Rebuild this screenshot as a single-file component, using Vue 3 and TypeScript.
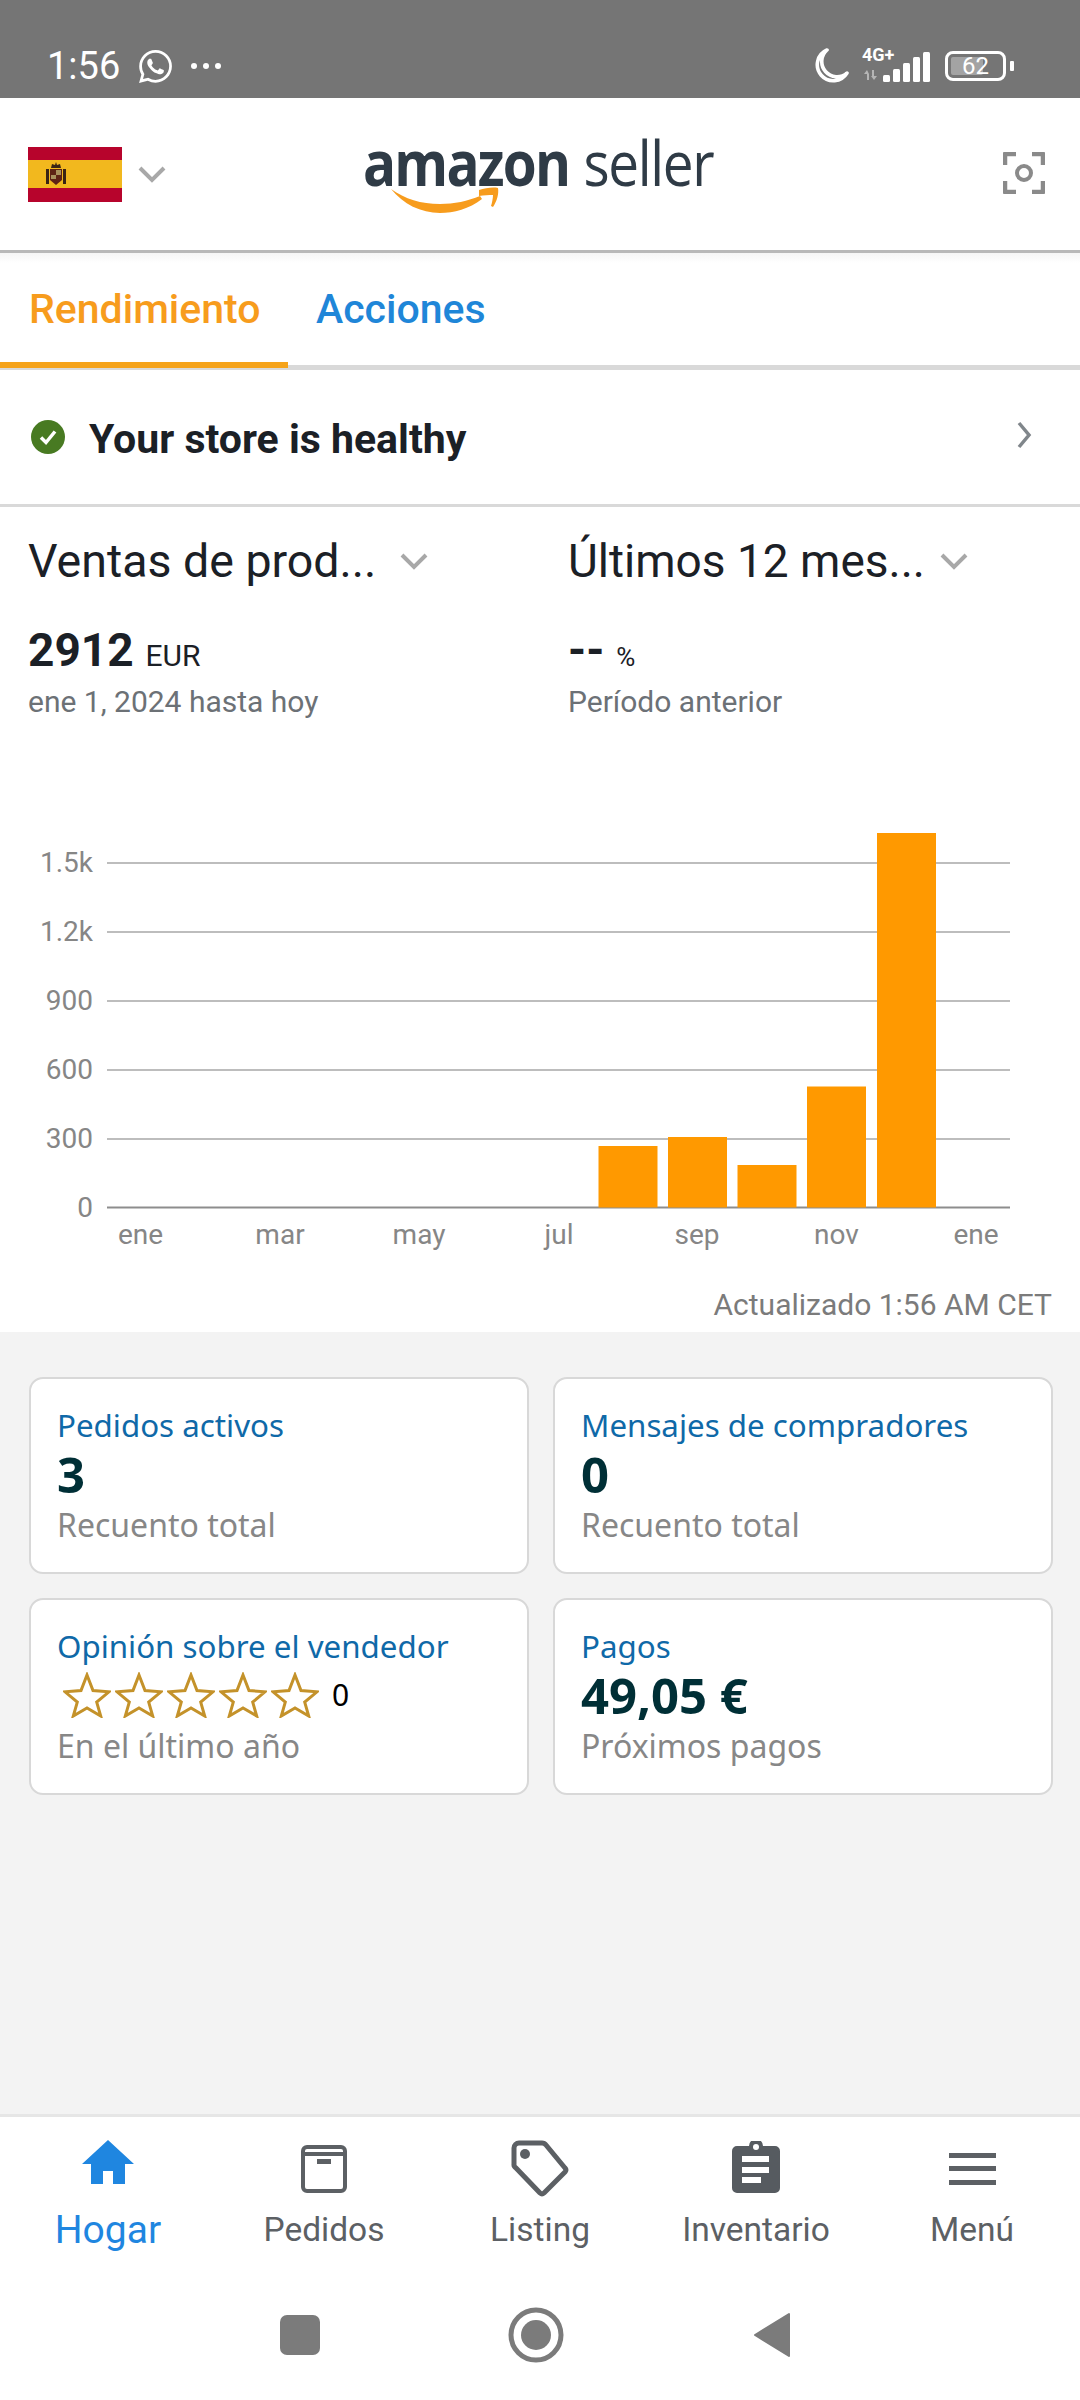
<script setup lang="ts">
const gridLines = [
  { label: "1.5k", y: 63 },
  { label: "1.2k", y: 132 },
  { label: "900", y: 201 },
  { label: "600", y: 270 },
  { label: "300", y: 339 },
  { label: "0", y: 407.5 },
];

const months = [
  { label: "ene", x: 140.5 },
  { label: "mar", x: 280 },
  { label: "may", x: 419 },
  { label: "jul", x: 559 },
  { label: "sep", x: 697 },
  { label: "nov", x: 836.5 },
  { label: "ene", x: 976 },
];

const bars = [
  { x: 598.5, top: 346 },
  { x: 668, top: 337 },
  { x: 737.5, top: 365 },
  { x: 807, top: 286.5 },
  { x: 877, top: 33 },
];

const signalBars = [
  { x: 0, h: 7 },
  { x: 10, h: 13 },
  { x: 20, h: 19 },
  { x: 30, h: 25 },
  { x: 40, h: 30 },
];

const stars = [0, 1, 2, 3, 4];
</script>

<template>
  <div class="screen">
    <div class="status-bar">
      <div class="status-left">
        <span class="clock">1:56</span>
        <svg class="wa" viewBox="0 0 24 24" width="33" height="33">
          <path fill="#fff" d="M17.472 14.382c-.297-.149-1.758-.867-2.03-.967-.273-.099-.471-.148-.67.15-.197.297-.767.966-.94 1.164-.173.199-.347.223-.644.075-.297-.15-1.255-.463-2.39-1.475-.883-.788-1.48-1.761-1.653-2.059-.173-.297-.018-.458.13-.606.134-.133.298-.347.446-.52.149-.174.198-.298.298-.497.099-.198.05-.371-.025-.52-.075-.149-.669-1.612-.916-2.207-.242-.579-.487-.5-.669-.51-.173-.008-.371-.01-.57-.01-.198 0-.52.074-.792.372-.272.297-1.04 1.016-1.04 2.479 0 1.462 1.065 2.875 1.213 3.074.149.198 2.096 3.2 5.077 4.487.709.306 1.262.489 1.694.625.712.227 1.36.195 1.871.118.571-.085 1.758-.719 2.006-1.413.248-.694.248-1.289.173-1.413-.074-.124-.272-.198-.57-.347m-5.421 7.403h-.004a9.87 9.87 0 01-5.031-1.378l-.361-.214-3.741.982.998-3.648-.235-.374a9.86 9.86 0 01-1.51-5.26c.001-5.45 4.436-9.884 9.888-9.884 2.64 0 5.122 1.03 6.988 2.898a9.825 9.825 0 012.893 6.994c-.003 5.45-4.437 9.884-9.885 9.884m8.413-18.297A11.815 11.815 0 0012.05 0C5.495 0 .16 5.335.157 11.892c0 2.096.547 4.142 1.588 5.945L.057 24l6.305-1.654a11.882 11.882 0 005.683 1.448h.005c6.554 0 11.89-5.335 11.893-11.893a11.821 11.821 0 00-3.48-8.413z" />
        </svg>
        <div class="dots"><i></i><i></i><i></i></div>
      </div>
      <div class="status-right">
        <svg class="moon" viewBox="0 0 36 36" width="36" height="36">
          <path fill="none" stroke="#fff" stroke-width="3.6" stroke-linejoin="round" d="M13 3 A16 16 0 1 0 33 26 A15 15 0 0 1 13 3Z" />
        </svg>
        <div class="network">
          <span class="net-type">4G+</span>
          <svg class="arrows" viewBox="0 0 14 10" width="14" height="10">
            <path fill="#b5b5b5" d="M0 4l3-4 2 4v6H3V4zM8 0h2v6h3l-3 4-3-4h1z" />
          </svg>
          <svg class="signal" viewBox="0 0 48 30" width="48" height="30">
            <rect v-for="b in signalBars" :key="b.x" :x="b.x" :y="30 - b.h" width="7" :height="b.h" rx="1.5" fill="#fff" />
          </svg>
        </div>
        <div class="battery">
          <div class="battery-fill"></div>
          <span class="battery-text">62</span>
        </div>
        <div class="battery-nub"></div>
      </div>
    </div>

    <header class="top-bar">
      <div class="flag-box">
        <svg viewBox="0 0 94 55" width="94" height="55">
          <rect width="94" height="55" fill="#b7042c" />
          <rect y="13" width="94" height="28" fill="#f2b81e" />
          <path fill="#3a2415" d="M23 21l1-4 3 1 1-3 1 3 3-1 1 4z" />
          <rect x="18" y="22" width="3" height="15" fill="#3a2415" />
          <rect x="35" y="22" width="3" height="15" fill="#3a2415" />
          <path fill="#5e2316" d="M22 22h12v11l-6 5-6-5z" />
          <path fill="#a8905e" d="M28 23h5v5h-5zM23 28h5v4h-5z" />
        </svg>
        <svg class="chev-flag" viewBox="0 0 28 17" width="28" height="17">
          <path fill="none" stroke="#a8a8a8" stroke-width="4" d="M2 2l12 12L26 2" />
        </svg>
      </div>
      <div class="logo">
        <div class="logo-text">
          <span class="logo-amazon">amazon</span>
          <span class="logo-seller">seller</span>
        </div>
        <svg class="smile" viewBox="0 0 110 26" width="110" height="26">
          <path fill="#f79c1d" d="M0 2C14 12 30 17 49 17c14 0 28-3 40-8l2 3C78 22 63 26 49 26 30 26 12 17 0 2z" />
          <path fill="#f79c1d" d="M88 3c6-2 14-3 19-2 1 6-1 13-5 19l-2-1c1-3 2-8 2-11-4 0-9 0-14 1z" />
        </svg>
      </div>
      <svg class="scan" viewBox="0 0 42 42" width="42" height="42">
        <path fill="none" stroke="#8a8a8a" stroke-width="4.500" stroke-linejoin="round" d="M13 2H2v11M29 2h11v11M2 29v11h11M40 29v11H29" />
        <circle cx="21" cy="21" r="7" fill="none" stroke="#8a8a8a" stroke-width="4" />
      </svg>
    </header>

    <nav class="tabs">
      <div class="tab active">Rendimiento</div>
      <div class="tab">Acciones</div>
    </nav>

    <div class="health">
      <svg viewBox="0 0 34 34" width="34" height="34">
        <circle cx="17" cy="17" r="17" fill="#487a22" />
        <path fill="none" stroke="#fff" stroke-width="3.500" d="M10 17.500l5 5 9-11" />
      </svg>
      <span class="health-text">Your store is healthy</span>
      <svg class="health-chev" viewBox="0 0 16 28" width="16" height="28">
        <path fill="none" stroke="#80868b" stroke-width="3.500" d="M3 2l10 12L3 26" />
      </svg>
    </div>

    <section class="sales">
      <div class="metric metric-left">
        <div class="select">
          <span class="select-text">Ventas de prod...</span>
          <svg viewBox="0 0 28 17" width="28" height="17">
            <path fill="none" stroke="#a8a8a8" stroke-width="4" d="M2 2l12 12L26 2" />
          </svg>
        </div>
        <div class="figure"><b>2912</b> <span>EUR</span></div>
        <div class="caption">ene 1, 2024 hasta hoy</div>
      </div>
      <div class="metric metric-right">
        <div class="select">
          <span class="select-text">Últimos 12 mes...</span>
          <svg viewBox="0 0 28 17" width="28" height="17">
            <path fill="none" stroke="#a8a8a8" stroke-width="4" d="M2 2l12 12L26 2" />
          </svg>
        </div>
        <div class="figure"><b>--</b> <span class="pct">%</span></div>
        <div class="caption">Período anterior</div>
      </div>
    </section>

    <svg class="chart" viewBox="0 0 1080 470" width="1080" height="470">
      <g v-for="g in gridLines" :key="g.label">
        <line x1="107" x2="1010" :y1="g.y" :y2="g.y" :stroke="g.label === '0' ? '#8d8d8d' : '#bdbdbd'" stroke-width="2" />
        <text x="93" :y="g.y + 9" text-anchor="end" class="axis">{{ g.label }}</text>
      </g>
      <rect v-for="b in bars" :key="b.x" :x="b.x" :y="b.top" width="59" :height="407.5 - b.top" fill="#ff9900" />
      <text v-for="m in months" :key="m.x" :x="m.x" y="444" text-anchor="middle" class="axis">{{ m.label }}</text>
    </svg>

    <div class="updated">Actualizado 1:56 AM CET</div>

    <main class="cards-area">
      <div class="cards">
        <div class="card">
          <div class="card-title">Pedidos activos</div>
          <div class="card-value">3</div>
          <div class="card-sub">Recuento total</div>
        </div>
        <div class="card">
          <div class="card-title">Mensajes de compradores</div>
          <div class="card-value">0</div>
          <div class="card-sub">Recuento total</div>
        </div>
        <div class="card">
          <div class="card-title">Opinión sobre el vendedor</div>
          <div class="card-value stars">
            <svg v-for="s in stars" :key="s" viewBox="0 0 48 46" width="48" height="46" class="star">
              <path fill="#fff" stroke="#c4922a" stroke-width="3" stroke-linejoin="miter" d="M24 3l6 15.500 16 1.300-12.300 10.300L37.700 44 24 36l-13.700 8 4-13.900L2 19.800l16-1.300z" />
            </svg>
            <span class="star-count">0</span>
          </div>
          <div class="card-sub">En el último año</div>
        </div>
        <div class="card">
          <div class="card-title">Pagos</div>
          <div class="card-value">49,05 €</div>
          <div class="card-sub">Próximos pagos</div>
        </div>
      </div>
    </main>

    <footer class="bottom-nav">
      <div class="nav-item current">
        <div class="nav-icon">
          <svg viewBox="0 0 52 44" width="52" height="44">
            <path fill="#1f86e0" d="M26 0l26 24H43v20H31V31H21v13H9V24H0z" />
          </svg>
        </div>
        <span>Hogar</span>
      </div>
      <div class="nav-item">
        <div class="nav-icon">
          <svg viewBox="0 0 46 48" width="46" height="48">
            <rect x="2" y="2" width="42" height="44" rx="4" fill="none" stroke="#5c6064" stroke-width="4" />
            <rect x="2" y="7" width="42" height="4" fill="#5c6064" />
            <rect x="16" y="14" width="14" height="5" fill="#5c6064" />
          </svg>
        </div>
        <span>Pedidos</span>
      </div>
      <div class="nav-item">
        <div class="nav-icon">
          <svg viewBox="0 0 58 58" width="58" height="58">
            <path fill="none" stroke="#5c6064" stroke-width="5" stroke-linejoin="round" d="M8 3h23a5 5 0 0 1 4 2l19 23a3 3 0 0 1 0 4L33 53a3 3 0 0 1-4 0L5 28a4 4 0 0 1-2-4V8a5 5 0 0 1 5-5z" />
            <circle cx="14" cy="14" r="5" fill="#5c6064" />
          </svg>
        </div>
        <span>Listing</span>
      </div>
      <div class="nav-item">
        <div class="nav-icon clip">
          <svg viewBox="0 0 48 52" width="48" height="52">
            <path fill="#565b60" d="M5 5h12a7 7 0 0 1 14 0h12a5 5 0 0 1 5 5v37a5 5 0 0 1-5 5H5a5 5 0 0 1-5-5V10a5 5 0 0 1 5-5z" />
            <circle cx="24" cy="6" r="3" fill="#fff" />
            <rect x="10" y="15" width="27" height="6" fill="#fff" />
            <rect x="10" y="26" width="27" height="6" fill="#fff" />
            <rect x="10" y="36" width="19" height="6" fill="#fff" />
          </svg>
        </div>
        <span>Inventario</span>
      </div>
      <div class="nav-item">
        <div class="nav-icon">
          <svg viewBox="0 0 47 32" width="47" height="32">
            <rect y="0" width="47" height="5" fill="#5c6064" />
            <rect y="13" width="47" height="5" fill="#5c6064" />
            <rect y="27" width="47" height="5" fill="#5c6064" />
          </svg>
        </div>
        <span>Menú</span>
      </div>
    </footer>

    <div class="system-nav">
      <div class="sys-square"></div>
      <svg viewBox="0 0 56 56" width="56" height="56">
        <circle cx="28" cy="28" r="25" fill="none" stroke="#7b7b7b" stroke-width="5" />
        <circle cx="28" cy="28" r="15" fill="#7b7b7b" />
      </svg>
      <svg viewBox="0 0 38 46" width="38" height="46">
        <path fill="#7b7b7b" stroke="#7b7b7b" stroke-width="2" stroke-linejoin="round" d="M36 2v42L2 23z" />
      </svg>
    </div>
  </div>
</template>

<style>
html, body { margin: 0; padding: 0; background: #fff; }
</style>

<style scoped>
.screen {
  width: 1080px;
  height: 2400px;
  display: flex;
  flex-direction: column;
  overflow: hidden;
  background: #fff;
  font-family: Roboto, "Liberation Sans", sans-serif;
  color: #1b2026;
}

/* status bar */
.status-bar {
  height: 98px;
  flex: none;
  box-sizing: border-box;
  padding: 46px 66px 0 47px;
  background: #757575;
  display: flex;
  justify-content: space-between;
  align-items: flex-start;
  color: #fff;
}
.status-left { display: flex; align-items: center; height: 40px; }
.clock { font-size: 38px; width: 92px; }
.wa { flex: none; }
.dots { display: flex; gap: 6px; margin-left: 19px; }
.dots i { width: 6px; height: 6px; border-radius: 50%; background: #fff; }
.status-right { display: flex; align-items: flex-start; height: 40px; }
.moon { margin-top: 1px; }
.network { position: relative; width: 68px; height: 36px; margin-left: 12px; }
.net-type { position: absolute; left: 0; top: 0; font-size: 18px; font-weight: 700; line-height: 18px; }
.arrows { position: absolute; left: 2px; top: 24px; }
.signal { position: absolute; left: 21px; top: 6px; }
.battery {
  position: relative;
  width: 61px;
  height: 30px;
  box-sizing: border-box;
  margin: 5px 0 0 15px;
  border: 3px solid #fff;
  border-radius: 8px;
  text-align: center;
}
.battery-fill { position: absolute; left: 3px; top: 3px; bottom: 3px; width: 32px; background: #a3a3a3; border-radius: 2px; }
.battery-text { position: relative; font-size: 24px; line-height: 24px; display: block; }
.battery-nub { width: 4px; height: 10px; margin: 15px 0 0 4px; background: #fff; border-radius: 1px; }

/* top bar */
.top-bar {
  height: 155px;
  flex: none;
  box-sizing: border-box;
  position: relative;
  display: flex;
  align-items: center;
  justify-content: space-between;
  padding: 0 35px 5px 28px;
  border-bottom: 3px solid #b9b9b9;
}
.flag-box { display: flex; align-items: center; gap: 16px; margin-top: 6px; }
.scan { margin-top: 2px; }
.logo { position: absolute; left: 363px; top: 29px; width: 360px; }
.logo-text {
  display: flex;
  align-items: baseline;
  gap: 16px;
  color: #2f3b46;
  line-height: 70px;
  width: 420px;
  transform: scaleX(0.885);
  transform-origin: left center;
}
.logo-amazon { font-family: "Open Sans", sans-serif; font-weight: 700; font-size: 62px; letter-spacing: -2px; }
.logo-seller { font-family: "Open Sans", sans-serif; font-weight: 400; font-size: 62px; letter-spacing: -1.5px; }
.smile { position: absolute; left: 28px; top: 60px; }

/* tabs */
.tabs {
  height: 117px;
  flex: none;
  box-sizing: border-box;
  display: flex;
  border-bottom: 5px solid #d9d9d9;
  background: linear-gradient(#f6f6f6, #fff 10px);
}
.tab {
  position: relative;
  box-sizing: border-box;
  padding: 30px 28px 0 28px;
  font-size: 41px;
  font-weight: 500;
  line-height: 52px;
  color: #1f86d8;
}
.tab.active { width: 288px; padding-left: 29px; color: #f79c1d; }
.tab.active::after {
  content: "";
  position: absolute;
  left: 0;
  right: 0;
  bottom: -3px;
  height: 6px;
  background: #f5a31a;
}

/* store health */
.health {
  height: 137px;
  flex: none;
  box-sizing: border-box;
  display: flex;
  align-items: center;
  padding: 0 48px 0 31px;
  border-bottom: 3px solid #d9d9d9;
}
.health-text { margin-left: 24px; margin-top: 4px; font-size: 41px; font-weight: 700; }
.health-chev { margin-left: auto; margin-top: -4px; }

/* sales figures */
.sales { display: flex; height: 293px; flex: none; }
.metric { box-sizing: border-box; }
.metric-left { width: 568px; padding-left: 28px; }
.metric-right { flex: 1; }
.select { display: flex; align-items: center; height: 60px; margin-top: 24px; }
.select-text { font-size: 46.5px; white-space: nowrap; }
.metric-right .select-text { font-size: 46px; }
.metric-left .select svg { margin-left: 24px; }
.metric-right .select svg { margin-left: 15px; }
.figure { margin-top: 31px; line-height: 56px; white-space: nowrap; }
.figure b { font-size: 46px; font-weight: 700; }
.figure span { font-size: 30px; margin-left: 8px; }
.figure .pct { font-size: 26px; margin-left: 8px; }
.caption { margin-top: -5px; font-size: 30px; line-height: 36px; color: #6c7176; }

/* chart */
.chart { display: block; flex: none; }
.axis { font-family: Roboto, sans-serif; font-size: 28px; fill: #868686; }
.updated {
  flex: none;
  height: 62px;
  box-sizing: border-box;
  padding: 12px 28px 0 0;
  text-align: right;
  font-size: 30px;
  line-height: 46px;
  color: #7b7b7b;
}

/* cards */
.cards-area {
  flex: 1;
  background: #f3f3f3;
  padding: 45px 28px 0 29px;
}
.cards { display: grid; grid-template-columns: 500px 500px; gap: 24px; }
.card {
  box-sizing: border-box;
  height: 197px;
  padding: 28px 26px 0;
  background: #fff;
  border: 2px solid #d8d8d8;
  border-radius: 14px;
  font-family: "Noto Sans", "Open Sans", sans-serif;
}
.card-title { font-size: 31.3px; line-height: 36px; color: #0f69a8; white-space: nowrap; }
.card-value { font-size: 49px; font-weight: 700; line-height: 56px; margin-top: 3px; color: #002f36; }
.card-sub { font-size: 32px; line-height: 42px; margin-top: 2px; color: #878787; white-space: nowrap; }
.stars { display: flex; align-items: center; gap: 0; padding-left: 6px; height: 56px; }
.star { margin-right: 4px; flex: none; }
.star-count { margin-left: 9px; font-size: 30px; font-weight: 400; line-height: 30px; color: #000; }

/* bottom nav */
.bottom-nav {
  height: 173px;
  flex: none;
  box-sizing: border-box;
  display: grid;
  grid-template-columns: repeat(5, 216px);
  border-top: 3px solid #e6e6e6;
  padding-top: 21px;
}
.nav-item { display: flex; flex-direction: column; align-items: center; font-size: 33.5px; line-height: 44px; color: #5c6064; }
.nav-icon { height: 62px; box-sizing: border-box; display: flex; align-items: center; justify-content: center; margin-bottom: 8px; }
.nav-icon.clip { padding-bottom: 5px; }
.nav-item.current { color: #1f86e0; font-size: 39px; }
.nav-item.current .nav-icon { align-items: flex-start; padding-top: 2px; }

/* android nav */
.system-nav {
  height: 113px;
  flex: none;
  display: flex;
  align-items: center;
  padding-left: 280px;
  padding-bottom: 18px;
  box-sizing: border-box;
}
.sys-square { width: 40px; height: 40px; border-radius: 7px; background: #7b7b7b; margin-right: 188px; flex: none; }
.system-nav svg:last-child { margin-left: 189px; }
</style>
